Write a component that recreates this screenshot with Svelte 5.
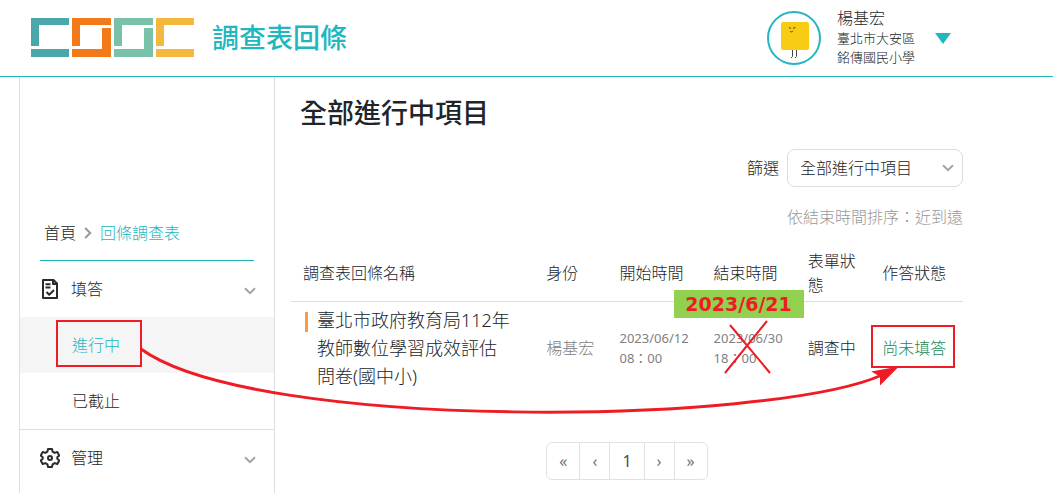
<script lang="ts">
    const openItems = [
        { name: "進行中", active: true },
        { name: "已截止", active: false },
    ];

    const columns = [
        { name: "調查表回條名稱", width: 36.2 },
        { name: "身份", width: 10.9 },
        { name: "開始時間", width: 14 },
        { name: "結束時間", width: 14 },
        { name: "表單狀態", width: 11.1 },
        { name: "作答狀態", width: 13.8 },
    ];

    const surveys = [
        {
            title: "臺北市政府教育局112年教師數位學習成效評估問卷(國中小)",
            owner: "楊基宏",
            start: ["2023/06/12", "08：00"],
            end: ["2023/06/30", "18：00"],
            newEnd: "2023/6/21",
            status: "調查中",
            answer: "尚未填答",
        },
    ];

    const pages = ["«", "‹", "1", "›", "»"];

    let filter = "全部進行中項目";
</script>

{#snippet chevron()}
    <svg class="chevron" viewBox="0 0 12 8" aria-hidden="true">
        <path d="M1 1.2 6 6.2 11 1.2" />
    </svg>
{/snippet}

<div class="page">
    <header>
        <a class="brand" href="#home">
            <svg class="logo" viewBox="0 0 163 40" aria-label="COOC">
                <path fill="#4aa8ab" d="M0 0h38v7H8v21H0zM0 31h38v8H0z" />
                <path
                    fill="#f27a1a"
                    d="M41 0h39v7H49v21h-8zM71 10h9v29H41v-8h30z"
                />
                <path
                    fill="#79c1a8"
                    d="M83 0h39v7H91v21h-8zM113 10h9v29H83v-8h30z"
                />
                <path
                    fill="#f5b83f"
                    d="M125 0h38v7h-30v21h-8zM125 31h38v8h-38z"
                />
            </svg>
            <span>調查表回條</span>
        </a>

        <button class="user">
            <svg class="avatar" viewBox="0 0 54 54" aria-hidden="true">
                <circle cx="27" cy="27" r="26" />
                <rect x="14" y="11" width="28" height="28" rx="2" />
                <path
                    d="M22 16.5l2 .8M26 17.2l2.5-.6M23 20c.7 1.2 2.4 1.2 3-.2M25.5 39v6.500l-1.500 1.500M29.500 39v6.500l-1.500 1.500"
                />
            </svg>
            <span class="info">
                <span class="name">楊基宏</span>
                <span>臺北市大安區</span>
                <span>銘傳國民小學</span>
            </span>
            <svg class="caret" viewBox="0 0 16 11" aria-hidden="true">
                <path d="M0 0h16L8 11z" />
            </svg>
        </button>
    </header>

    <div class="body">
        <aside>
            <nav class="breadcrumb">
                <a href="#home">首頁</a>
                <svg viewBox="0 0 8 12" aria-hidden="true">
                    <path d="M1.200 1 6.200 6 1.200 11" />
                </svg>
                <a class="current" href="#surveys">回條調查表</a>
            </nav>

            <button class="group">
                <svg class="icon" viewBox="0 0 20 20" aria-hidden="true">
                    <path
                        d="M3 1h10.500L17 4.500V19H3zM5.500 5.200h5M5.500 8.500h5M6.500 13l2.700 2.700L14 11M13 1v4h4"
                    />
                </svg>
                <span>填答</span>
                {@render chevron()}
            </button>
            <ul>
                {#each openItems as item}
                    <li class:active={item.active}>
                        <a href="#list">{item.name}</a>
                    </li>
                {/each}
            </ul>

            <button class="group">
                <svg class="icon" viewBox="0 0 20 20" aria-hidden="true">
                    <path
                        d="M8 1h4l.6 2.700 2 1.200L17.300 4l2 3.500-2 1.800v1.400l2 1.800-2 3.500-2.700-.9-2 1.200L12 19H8l-.6-2.700-2-1.200-2.700.9-2-3.500 2-1.800V9.300l-2-1.800 2-3.500 2.700.9 2-1.200z"
                    />
                    <circle cx="10" cy="10" r="2" />
                </svg>
                <span>管理</span>
                {@render chevron()}
            </button>
        </aside>

        <main>
            <h1>全部進行中項目</h1>

            <div class="filter">
                <label for="filter">篩選</label>
                <div class="select">
                    <select id="filter" bind:value={filter}>
                        <option>全部進行中項目</option>
                    </select>
                    {@render chevron()}
                </div>
            </div>
            <p class="sort">依結束時間排序：近到遠</p>

            <table>
                <thead>
                    <tr>
                        {#each columns as c}
                            <th style="width: {c.width}%">{c.name}</th>
                        {/each}
                    </tr>
                </thead>
                <tbody>
                    {#each surveys as s}
                        <tr>
                            <td class="title"><div>{s.title}</div></td>
                            <td class="owner">{s.owner}</td>
                            <td class="date">{s.start[0]}<br />{s.start[1]}</td>
                            <td class="date">
                                {s.end[0]}<br />{s.end[1]}
                                <strong>{s.newEnd}</strong>
                            </td>
                            <td>{s.status}</td>
                            <td class="answer">{s.answer}</td>
                        </tr>
                    {/each}
                </tbody>
            </table>

            <nav class="pagination" aria-label="分頁">
                {#each pages as p}
                    <button class:number={p === "1"}>{p}</button>
                {/each}
            </nav>
        </main>
    </div>

    <!-- red marks drawn over the page -->
    <svg class="marks" viewBox="0 0 1053 493" aria-hidden="true">
        <rect x="57" y="321" width="84" height="45" />
        <rect x="872" y="326" width="82" height="41" />
        <path d="M730 325 770 373M767 321 725 373" />
        <path class="arrow" d="M141 349C255 432 770 425 882 375" />
        <path class="head" d="M896 368 881 383 881 376 874 372z" />
    </svg>
</div>

<style>
    :global(body) {
        margin: 0;
    }

    .page {
        position: relative;
        display: flex;
        flex-direction: column;
        min-height: 100vh;
        overflow: hidden;
        background: #fff;
        color: #212529;
        font: 300 16px/24px "Noto Sans", "Noto Sans CJK TC", sans-serif;
    }

    a {
        color: inherit;
        text-decoration: none;
    }

    button {
        padding: 0;
        border: 0;
        background: none;
        color: inherit;
        font: inherit;
        text-align: left;
        cursor: pointer;
    }

    header {
        display: flex;
        align-items: center;
        justify-content: space-between;
        height: 76px;
        padding: 0 102px 0 31px;
        border-bottom: 1px solid #20b7bf;
    }

    .brand {
        display: flex;
        align-items: center;
        gap: 18px;
        color: #20b7bf;
        font-size: 27px;
        font-weight: 500;
        line-height: 40px;
    }

    .logo {
        width: 163px;
        height: 40px;
    }

    .user {
        display: flex;
        align-items: center;
        gap: 16px;
    }

    .avatar {
        width: 54px;
        height: 54px;
    }

    .avatar circle {
        fill: #fff;
        stroke: #20b7bf;
        stroke-width: 2;
    }

    .avatar rect {
        fill: #f8cb15;
    }

    .avatar path {
        fill: none;
        stroke: #444;
    }

    .info {
        display: flex;
        flex-direction: column;
        padding-bottom: 2px;
        font-size: 13px;
        line-height: 19px;
    }

    .name {
        font-size: 16px;
        line-height: 22px;
    }

    .caret {
        width: 16px;
        height: 11px;
        margin-left: 4px;
        fill: #20b7bf;
    }

    .body {
        display: flex;
        flex: 1;
        padding: 0 90px 0 19px;
    }

    aside {
        flex: none;
        box-sizing: border-box;
        width: 256px;
        padding-top: 128px;
        border: solid #dedede;
        border-width: 0 1px;
    }

    .breadcrumb {
        display: flex;
        align-items: center;
        gap: 8px;
        height: 55px;
        margin: 0 20px;
        padding-left: 4px;
        border-bottom: 1px solid #20b7bf;
    }

    .breadcrumb svg {
        width: 8px;
        height: 12px;
        fill: none;
        stroke: #999;
        stroke-width: 2;
    }

    .current,
    .active {
        color: #20b7bf;
    }

    .group {
        display: flex;
        align-items: center;
        gap: 11px;
        width: 100%;
        height: 56px;
        padding: 0 18px 0 20px;
    }

    .icon {
        width: 20px;
        height: 20px;
        fill: none;
        stroke: #2b2b2b;
        stroke-width: 2;
        stroke-linejoin: round;
    }

    .chevron {
        width: 12px;
        height: 8px;
        margin-left: auto;
        fill: none;
        stroke: #a3a3a3;
        stroke-width: 2;
    }

    .group .chevron {
        padding-top: 4px;
    }

    ul {
        margin: 0;
        padding: 0;
        border-bottom: 1px solid #dedede;
        list-style: none;
    }

    li a {
        display: block;
        padding: 16px 52px;
    }

    .active {
        background: #f5f5f5;
    }

    main {
        flex: 1;
        min-width: 0;
        padding: 16px 0 12px 16px;
    }

    h1 {
        margin: 0 0 16px 9px;
        font-size: 27px;
        font-weight: 500;
        line-height: 40px;
    }

    .filter {
        display: flex;
        align-items: center;
        justify-content: flex-end;
        gap: 8px;
    }

    .select {
        display: grid;
        align-items: center;
        width: 176px;
    }

    .select > :global(*) {
        grid-area: 1 / 1;
    }

    .select .chevron {
        margin-right: 9px;
        pointer-events: none;
    }

    select {
        width: 100%;
        height: 38px;
        padding: 0 12px;
        border: 1px solid #dedede;
        border-radius: 8px;
        appearance: none;
        background: #fff;
        color: inherit;
        font: inherit;
    }

    .sort {
        margin: 18px 0 16px;
        color: #999;
        text-align: right;
    }

    table {
        width: 100%;
        border-collapse: separate;
        border-spacing: 0;
        table-layout: fixed;
    }

    th,
    td {
        box-sizing: border-box;
        padding: 4px 8px 4px 12px;
        font-weight: inherit;
        text-align: left;
    }

    th {
        border-bottom: 1px solid #dedede;
    }

    .title {
        padding: 4px 20px 4px 14px;
        font-size: 18px;
        line-height: 28px;
    }

    .title div {
        padding-left: 12px;
        background: linear-gradient(#fd9a3e, #fd9a3e) 0 6px / 3px 20px no-repeat;
    }

    .owner {
        color: #808080;
    }

    .date {
        position: relative;
        color: #808080;
        font-size: 13px;
        font-weight: 400;
        line-height: 20px;
    }

    .date strong {
        position: absolute;
        top: -12px;
        left: -28px;
        width: 130px;
        background: #92d050;
        color: #ee1c25;
        font: bold 19px/28px "DejaVu Sans", sans-serif;
        text-align: center;
    }

    .answer {
        color: #198754;
    }

    .pagination {
        display: flex;
        width: max-content;
        margin: 48px auto 0;
        border: 1px solid #dee2e6;
        border-radius: 6px;
    }

    .pagination button {
        padding: 6px 12px;
        color: #6c757d;
        font-weight: 400;
    }

    .pagination button + button {
        border-left: 1px solid #dee2e6;
    }

    .pagination .number {
        color: #495057;
    }

    .marks {
        position: absolute;
        top: 0;
        left: 0;
        width: 1053px;
        height: 493px;
        fill: none;
        stroke: #ee1c25;
        stroke-width: 2;
        pointer-events: none;
    }

    .marks .arrow {
        stroke-width: 3;
    }

    .marks .head {
        fill: #ee1c25;
    }
</style>
